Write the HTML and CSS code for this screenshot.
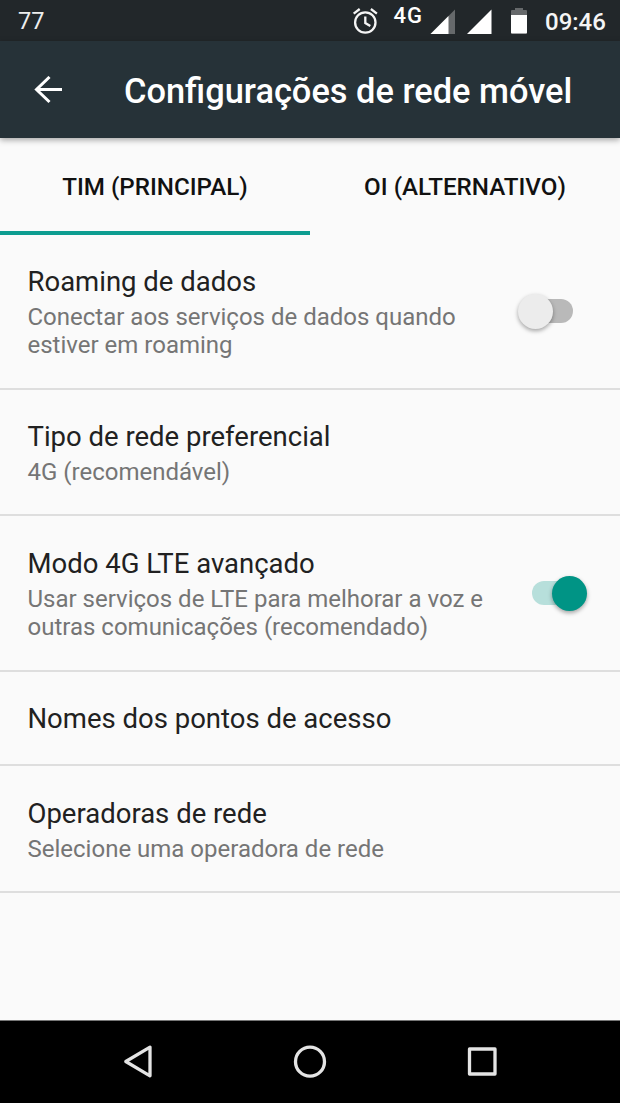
FILE: index.html
```html
<!DOCTYPE html>
<html lang="pt-BR">
<head>
<meta charset="utf-8">
<title>Configurações de rede móvel</title>
<link rel="stylesheet" href="styles.css">
</head>
<body>
<div class="status">
  <span class="count">77</span>
  <svg class="status-icons" width="200" height="41" viewBox="340 0 200 41">
    <g fill="none" stroke="#f5f5f5" stroke-width="2.3">
      <circle cx="365.300" cy="22.500" r="10.200"/>
      <path d="M365.300 16.500v6.500l5 3M353.700 13.700l6-4.700M376.900 13.700l-6-4.700"/>
    </g>
    <path d="M455 9.500v24.500h-24.500z" fill="#66696b"/>
    <path d="M448.500 16v18h-18z" fill="#fff"/>
    <path d="M491.500 9.500v24.500h-24.500z" fill="#fff"/>
    <path d="M511 11q0-1 1-1h3v-2h8v2h3q1 0 1 1v22.500h-16z" fill="#66696b"/>
    <path d="M511 15h16v17.500q0 1-1 1h-14q-1 0-1-1z" fill="#fff"/>
    <text class="net" x="393.500" y="22.500">4G</text>
  </svg>
  <span class="clock">09:46</span>
</div>
<header class="bar">
  <svg class="back" width="30" height="28" viewBox="0 0 30 28"><path d="M29 13.500H4M16.500 1L3.500 13.500 16.500 26" fill="none" stroke="#fff" stroke-width="3"/></svg>
  <h1 class="title">Configurações de rede móvel</h1>
</header>
<nav class="tabs">
  <div class="tab active">TIM (PRINCIPAL)</div>
  <div class="tab">OI (ALTERNATIVO)</div>
</nav>
<main class="list">
  <section class="row roaming">
    <div><h2>Roaming de dados</h2><p>Conectar aos serviços de dados quando<br>estiver em roaming</p></div>
    <div class="switch"><i class="knob"></i></div>
  </section>
  <section class="row type"><div><h2>Tipo de rede preferencial</h2><p>4G (recomendável)</p></div></section>
  <section class="row lte">
    <div><h2>Modo 4G LTE avançado</h2><p>Usar serviços de LTE para melhorar a voz e<br>outras comunicações (recomendado)</p></div>
    <div class="switch on"><i class="knob"></i></div>
  </section>
  <section class="row apn"><div><h2>Nomes dos pontos de acesso</h2></div></section>
  <section class="row operators"><div><h2>Operadoras de rede</h2><p>Selecione uma operadora de rede</p></div></section>
</main>
<footer class="navbar">
  <svg width="620" height="82" viewBox="0 1021 620 82" fill="none" stroke="#e4e4e4" stroke-width="3.3" stroke-linejoin="round">
    <path d="M150 1047.200v28.600l-24.200-14.300z"/><circle cx="310" cy="1061.700" r="14.500"/><path d="M469.500 1049h25.500v25h-25.500z"/>
  </svg>
</footer>
</body>
</html>
```
FILE: styles.css
```css
* { box-sizing: border-box; }
body { margin: 0; width: 620px; height: 1103px; display: flex; flex-direction: column; background: #fafafa; font-family: Roboto, sans-serif; overflow: hidden; }
.status { height: 41px; background: #22272a; color: #fff; display: flex; align-items: center; padding-left: 18px; font-size: 23.5px; }
.count { width: 322px; color: #ededed; }
.net { font: 500 22px Roboto, sans-serif; letter-spacing: 1px; fill: #fff; }
.clock { margin-left: 5px; padding-top: 2px; font-weight: 500; font-size: 24px; color: #f5f5f5; }
.bar { height: 97px; background: #263238; color: #fff; display: flex; align-items: center; padding-left: 33px; box-shadow: 0 2px 6px rgba(0,0,0,.35); z-index: 1; }
.back { margin-right: 61px; }
.title { margin: 0; padding-top: 2px; font-size: 34.4px; font-weight: 500; white-space: nowrap; }
.tabs { height: 97px; display: flex; }
.tab { width: 310px; display: flex; align-items: center; justify-content: center; padding-top: 4px; font-size: 24.2px; font-weight: 500; color: #111; border-bottom: 4px solid transparent; white-space: nowrap; }
.active { border-color: #0d9d90; }
.list { flex: 1; }
.row { padding: 30px 33px 0 27.5px; border-bottom: 2px solid #dedede; display: flex; justify-content: space-between; }
.roaming { height: 155px; }
.type { height: 126px; }
.lte { height: 156px; padding-top: 31px; }
.apn { height: 94px; }
.operators { height: 127px; padding-top: 31px; }
h2 { margin: 0; font-size: 27.5px; line-height: 34px; font-weight: 400; color: #212121; white-space: nowrap; }
p { margin: 4px 0 0; font-size: 24px; line-height: 28px; color: #757575; white-space: nowrap; }
.switch { width: 41px; height: 24px; border-radius: 12px; background: #b9b9b9; margin: 34px 14px 0 0; display: flex; align-items: center; flex: none; }
.knob { width: 35px; height: 35px; border-radius: 50%; background: #ececec; box-shadow: 0 2px 4px rgba(0,0,0,.35); margin-left: -14px; flex: none; }
.on { background: #b7dfdb; }
.on .knob { background: #009485; margin-left: 20px; }
.navbar { height: 83px; background: #000; border-top: 1px solid #777; }
.navbar svg { display: block; }
```
